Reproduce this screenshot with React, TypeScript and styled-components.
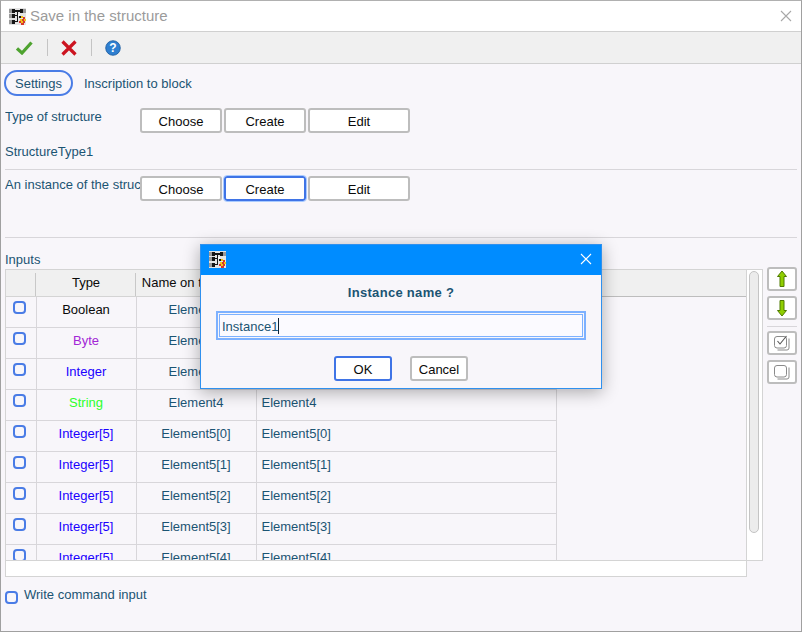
import { createGlobalStyle, styled } from "styled-components";

const GlobalStyle = createGlobalStyle`
  html, body { margin: 0; padding: 0; }
  body {
    width: 802px;
    height: 632px;
    overflow: hidden;
    font-family: "Liberation Sans", Arial, sans-serif;
    font-size: 13px;
    color: #1b5473;
  }
  * { box-sizing: border-box; }
`;

const Window = styled.div`
  position: relative;
  width: 802px;
  height: 632px;
  border: 1px solid #a0a0a0;
  border-top-color: #b0b0b0;
  background: #f8f6fa;
  display: flex;
  flex-direction: column;
`;

const TitleBar = styled.div`
  height: 31px;
  flex: none;
  background: #fff;
  border-bottom: 1px solid #d0d0d0;
  display: flex;
  align-items: center;
  padding: 0 9px 0 8px;
  gap: 4px;
`;

const TitleText = styled.span`
  font-size: 15px;
  color: #9b9b9b;
  flex: 1;
  padding-bottom: 2px;
`;

const Toolbar = styled.div`
  height: 32px;
  flex: none;
  background: #f0f0f0;
  border-bottom: 1px solid #d0d0d0;
  display: flex;
  align-items: center;
  padding-left: 15px;
`;

const ToolSep = styled.div`
  width: 1px;
  height: 17px;
  background: #c4c4c4;
  margin: 0 13px 0 14px;
`;

const Content = styled.div`
  flex: 1;
  padding: 6px 4px 0;
  display: flex;
  flex-direction: column;
`;

const Tabs = styled.div`
  height: 26px;
  margin-left: -1px;
  display: flex;
  align-items: center;
  gap: 11px;
`;

const TabButton = styled.button`
  width: 69px;
  height: 26px;
  padding: 0;
  border: 2px solid #4a7ce6;
  border-radius: 13px;
  background: #f8f6fa;
  font: inherit;
  color: inherit;
`;

const Row = styled.div<{ $top: number }>`
  display: flex;
  margin-top: ${(p) => p.$top}px;
  height: 25px;
`;

const RowLabel = styled.div`
  width: 135px;
  flex: none;
  padding-top: 1px;
  line-height: 16px;
  white-space: nowrap;
  overflow: hidden;
`;

const Actions = styled.div`
  display: flex;
  gap: 2px;
`;

const Btn = styled.button<{ $w: number; $focus?: boolean; $ring?: boolean }>`
  width: ${(p) => p.$w}px;
  height: 25px;
  padding: 1px 0 0;
  background: #fff;
  border: 2px solid ${(p) => (p.$focus ? "#3f74e6" : "#bdbdbd")};
  border-radius: 3px;
  outline: ${(p) => (p.$ring ? "1px solid #a9cbff" : "none")};
  font: inherit;
  color: #0a0a0a;
`;

const ValueLine = styled.div`
  height: 37px;
  border-bottom: 1px solid #d8d6da;
  padding-top: 11px;
  line-height: 15px;
`;

const Divider = styled.div`
  height: 1px;
  background: #d8d6da;
  margin-top: 36px;
`;

const SectionLabel = styled.div`
  height: 31px;
  padding-top: 14px;
  line-height: 15px;
`;

const TableArea = styled.div`
  display: flex;
  height: 308px;
`;

const TableWrap = styled.div`
  display: grid;
  grid-template-columns: 742px 16px;
  grid-template-rows: 292px 16px;
  width: 758px;
  flex: none;
`;

const Viewport = styled.div`
  border: 1px solid #d4d4d4;
  overflow: hidden;
`;

const Grid = styled.table`
  border-collapse: collapse;
  table-layout: fixed;
  width: 740px;
  & th, & td { padding: 0; }
`;

const HeadCell = styled.th<{ $w?: number; $fill?: boolean }>`
  position: relative;
  width: ${(p) => (p.$w ? `${p.$w}px` : "auto")};
  height: 26px;
  background: #f0f0f0;
  font-weight: normal;
  color: #0a0a0a;
  text-align: center;
  border-bottom: 1px solid ${(p) => (p.$fill ? "#bdbdbd" : "#d4d4d4")};
  white-space: nowrap;
  overflow: hidden;
  &::after {
    content: "";
    display: ${(p) => (p.$fill ? "none" : "block")};
    position: absolute;
    right: 0;
    top: 3px;
    bottom: 0;
    width: 1px;
    background: #c8c8c8;
  }
`;

const Cell = styled.td<{ $color?: string; $left?: boolean }>`
  height: 31px;
  vertical-align: top;
  padding-top: 5px !important;
  line-height: 16px;
  text-align: ${(p) => (p.$left ? "left" : "center")};
  padding-left: ${(p) => (p.$left ? 5 : 0)}px !important;
  color: ${(p) => p.$color ?? "inherit"};
  border-bottom: 1px solid #d8d6da;
  border-right: 1px solid #d8d6da;
  white-space: nowrap;
`;

const Box = styled.span`
  display: block;
  width: 13px;
  height: 13px;
  margin: -1px 0 0 7px;
  border: 2px solid #4a7ce6;
  border-radius: 4px;
  background: #f8f6fa;
`;

const VScroll = styled.div`
  background: #fff;
  border: 1px solid #d4d4d4;
  border-left: none;
  padding: 1px 3px 0 2px;
`;

const VThumb = styled.div`
  height: 262px;
  background: #ececec;
  border: 1px solid #c4c4c4;
  border-radius: 5px;
`;

const HScroll = styled.div`
  background: #fff;
  border: 1px solid #d4d4d4;
  border-top: none;
`;

const SideTools = styled.div`
  width: 30px;
  margin-left: 4px;
  margin-top: -2px;
  display: flex;
  flex-direction: column;
  gap: 5px;
`;

const SideBtn = styled.button`
  width: 30px;
  height: 24px;
  flex: none;
  padding: 0;
  background: #fff;
  border: 2px solid #bdbdbd;
  border-radius: 3px;
  display: flex;
  align-items: center;
  justify-content: center;
`;

const SideSep = styled.div`
  height: 1px;
  flex: none;
  margin: 1px 0 -1px;
  background: #d8d6da;
`;

const CheckRow = styled.div`
  display: flex;
  margin-top: 10px;
  gap: 6px;
  line-height: 15px;
`;

const BottomBox = styled(Box)`
  margin: 4px 0 0;
`;

const Dialog = styled.div`
  position: absolute;
  left: 199px;
  top: 243px;
  width: 402px;
  height: 145px;
  background: #f8f6fa;
  border: 1px solid #2f90ee;
  box-shadow: 0 3px 16px rgba(0, 0, 0, 0.32);
  display: flex;
  flex-direction: column;
`;

const DialogBar = styled.div`
  height: 30px;
  flex: none;
  background: #008cff;
  display: flex;
  align-items: center;
  justify-content: space-between;
  padding: 0 9px 2px 8px;
`;

const DialogTitle = styled.div`
  text-align: center;
  font-weight: bold;
  line-height: 15px;
  letter-spacing: 0.3px;
  margin-top: 10px;
`;

const NameField = styled.div`
  height: 29px;
  margin: 11px 15px 0;
  border: 2px solid #7db1ff;
  background: #f8f6fa;
  padding: 1px;
`;

const NameInner = styled.div`
  height: 23px;
  background: #fbfaff;
  border: 1px solid #7db1ff;
  padding: 1px 0 0 2px;
  display: flex;
  align-items: center;
`;

const Caret = styled.span`
  width: 1px;
  height: 16px;
  background: #123;
`;

const DialogActions = styled.div`
  display: flex;
  justify-content: center;
  gap: 18px;
  margin-top: 16px;
`;

const rows: [string, string, string, string][] = [
  ["Boolean", "#0a0a0a", "Element1", "Element1"],
  ["Byte", "#a326d6", "Element2", "Element2"],
  ["Integer", "#1a00ff", "Element3", "Element3"],
  ["String", "#2bff2b", "Element4", "Element4"],
  ["Integer[5]", "#1a00ff", "Element5[0]", "Element5[0]"],
  ["Integer[5]", "#1a00ff", "Element5[1]", "Element5[1]"],
  ["Integer[5]", "#1a00ff", "Element5[2]", "Element5[2]"],
  ["Integer[5]", "#1a00ff", "Element5[3]", "Element5[3]"],
  ["Integer[5]", "#1a00ff", "Element5[4]", "Element5[4]"],
];

function AppIcon() {
  return (
    <svg width="17" height="17" viewBox="0 0 17 17" shapeRendering="crispEdges">
      <rect width="17" height="17" fill="#e4e4e4" />
      <rect x="0" y="1" width="3" height="4" fill="#9a9a9a" />
      <rect x="3" y="1" width="3" height="4" fill="#161616" />
      <rect x="0" y="6" width="3" height="4" fill="#9a9a9a" />
      <rect x="3" y="6" width="3" height="4" fill="#161616" />
      <rect x="0" y="12" width="3" height="4" fill="#9a9a9a" />
      <rect x="3" y="12" width="3" height="4" fill="#161616" />
      <rect x="11" y="1" width="3" height="4" fill="#161616" />
      <rect x="14" y="1" width="3" height="4" fill="#9a9a9a" />
      <rect x="6" y="2" width="5" height="2" fill="#161616" />
      <rect x="6" y="7" width="3" height="1" fill="#161616" />
      <rect x="6" y="13" width="2" height="1" fill="#161616" />
      <rect x="8" y="4" width="1" height="10" fill="#161616" />
      <rect x="9" y="6" width="2" height="2" fill="#fff" />
      <rect x="10" y="8" width="2" height="2" fill="#161616" />
      <rect x="12" y="8" width="2" height="2" fill="#f0c419" />
      <rect x="14" y="9" width="2" height="2" fill="#d8382a" />
      <rect x="11" y="11" width="2" height="2" fill="#f0c419" />
      <rect x="13" y="11" width="2" height="2" fill="#d8382a" />
      <rect x="15" y="11" width="2" height="2" fill="#f0c419" />
      <rect x="10" y="13" width="2" height="2" fill="#d8382a" />
      <rect x="12" y="13" width="2" height="2" fill="#f0c419" />
      <rect x="14" y="13" width="2" height="2" fill="#d8382a" />
      <rect x="12" y="15" width="3" height="2" fill="#d8382a" />
    </svg>
  );
}

function CloseIcon({ color }: { color: string }) {
  return (
    <svg width="12" height="12" viewBox="0 0 12 12">
      <path d="M1 1L11 11M11 1L1 11" stroke={color} strokeWidth="1.1" fill="none" />
    </svg>
  );
}

function UpArrow() {
  return (
    <svg width="12" height="18" viewBox="0 0 12 18">
      <path d="M6 1L10.5 6.5H8V16.5H4V6.5H1.5Z" fill="#8fce00" stroke="#4f7a00" strokeWidth="1" />
    </svg>
  );
}

function DownArrow() {
  return (
    <svg width="12" height="18" viewBox="0 0 12 18">
      <path d="M6 17L10.5 11.5H8V1.5H4V11.5H1.5Z" fill="#8fce00" stroke="#4f7a00" strokeWidth="1" />
    </svg>
  );
}

function StackIcon({ checked }: { checked?: boolean }) {
  return (
    <svg width="16" height="16" viewBox="0 0 16 16" fill="none" stroke="#8a8a8a">
      <path d="M3.5 15H13Q15 15 15 13V3.5" />
      <rect x="0.5" y="1.5" width="12" height="11.5" rx="2.5" fill="#fff" />
      {checked && <path d="M3.5 6L6 9L12.5 1" stroke="#555" strokeWidth="1.1" />}
    </svg>
  );
}

export default function App() {
  return (
    <>
      <GlobalStyle />
      <Window>
        <TitleBar>
          <AppIcon />
          <TitleText>Save in the structure</TitleText>
          <CloseIcon color="#a8a8a8" />
        </TitleBar>
        <Toolbar>
          <svg width="17" height="14" viewBox="0 0 17 14">
            <path d="M1 7.5L6 12L15.5 1.5" stroke="#4ea32f" strokeWidth="3.2" fill="none" />
          </svg>
          <ToolSep />
          <svg width="16" height="16" viewBox="0 0 16 16">
            <path d="M1.5 1.5L14.5 14.5M14.5 1.5L1.5 14.5" stroke="#cc1420" strokeWidth="3.2" fill="none" />
          </svg>
          <ToolSep />
          <svg width="16" height="16" viewBox="0 0 16 16">
            <circle cx="8" cy="8" r="7.3" fill="#2f7fd0" stroke="#1a5a9e" strokeWidth="0.8" />
            <text x="8" y="12.2" textAnchor="middle" fontSize="12" fontWeight="bold" fill="#fff" fontFamily="Liberation Sans">?</text>
          </svg>
        </Toolbar>
        <Content>
          <Tabs>
            <TabButton>Settings</TabButton>
            <span>Inscription to block</span>
          </Tabs>
          <Row $top={12}>
            <RowLabel>Type of structure</RowLabel>
            <Actions>
              <Btn $w={82}>Choose</Btn>
              <Btn $w={82}>Create</Btn>
              <Btn $w={102}>Edit</Btn>
            </Actions>
          </Row>
          <ValueLine>StructureType1</ValueLine>
          <Row $top={6}>
            <RowLabel>An instance of the structure</RowLabel>
            <Actions>
              <Btn $w={82}>Choose</Btn>
              <Btn $w={82} $focus $ring>Create</Btn>
              <Btn $w={102}>Edit</Btn>
            </Actions>
          </Row>
          <Divider />
          <SectionLabel>Inputs</SectionLabel>
          <TableArea>
            <TableWrap>
              <Viewport>
                <Grid>
                  <thead>
                    <tr>
                      <HeadCell $w={30} />
                      <HeadCell $w={100}>Type</HeadCell>
                      <HeadCell $w={120}>Name on the block</HeadCell>
                      <HeadCell $w={300}>Name in the structure</HeadCell>
                      <HeadCell $fill />
                    </tr>
                  </thead>
                  <tbody>
                    {rows.map(([type, color, name, field], i) => (
                      <tr key={i}>
                        <Cell><Box /></Cell>
                        <Cell $color={color}>{type}</Cell>
                        <Cell>{name}</Cell>
                        <Cell $left>{field}</Cell>
                      </tr>
                    ))}
                  </tbody>
                </Grid>
              </Viewport>
              <VScroll><VThumb /></VScroll>
              <HScroll />
            </TableWrap>
            <SideTools>
              <SideBtn><UpArrow /></SideBtn>
              <SideBtn><DownArrow /></SideBtn>
              <SideSep />
              <SideBtn><StackIcon checked /></SideBtn>
              <SideBtn><StackIcon /></SideBtn>
            </SideTools>
          </TableArea>
          <CheckRow>
            <BottomBox />
            <span>Write command input</span>
          </CheckRow>
        </Content>
        <Dialog>
          <DialogBar>
            <AppIcon />
            <CloseIcon color="#fff" />
          </DialogBar>
          <DialogTitle>Instance name ?</DialogTitle>
          <NameField>
            <NameInner>Instance1<Caret /></NameInner>
          </NameField>
          <DialogActions>
            <Btn $w={58} $focus>OK</Btn>
            <Btn $w={58}>Cancel</Btn>
          </DialogActions>
        </Dialog>
      </Window>
    </>
  );
}
